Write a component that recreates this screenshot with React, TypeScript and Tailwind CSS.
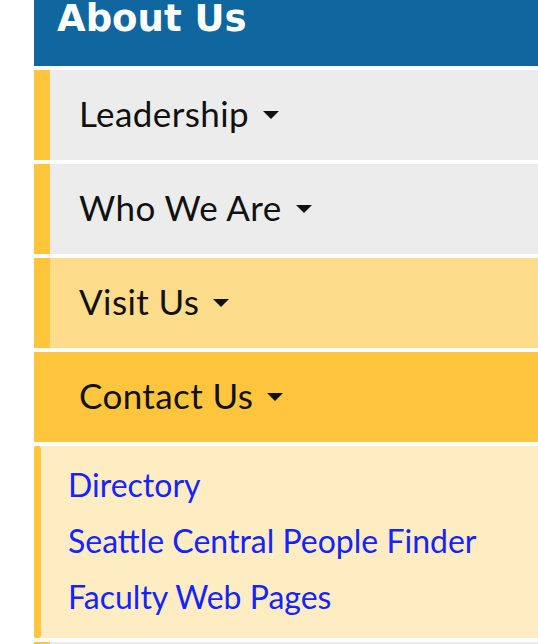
import React from "react";

const font = { fontFamily: "Lato, 'Open Sans', sans-serif" };

function Caret() {
  return (
    <svg width="16" height="8" viewBox="0 0 16 8" className="ml-[14px] mt-[3px]">
      <polygon points="0,0 16,0 8,8" fill="#111" />
    </svg>
  );
}

function Row({ label, bg, bar }: { label: string; bg: string; bar: string }) {
  return (
    <div className="flex h-[90px]">
      <div className={`w-[16px] ${bar}`} />
      <div className={`flex-1 flex items-center pl-[29px] pb-[3px] ${bg}`}>
        <span className="text-[35px] tracking-[0.4px] text-[#111] leading-none">{label}</span>
        <Caret />
      </div>
    </div>
  );
}

export default function App() {
  return (
    <div className="w-[538px] h-[644px] overflow-hidden bg-white pl-[34px]" style={font}>
      <div className="flex flex-col gap-[4px]">
        <div className="h-[66px] bg-[#10679f] pl-[23px]">
          <div
            className="text-white font-bold text-[37px] leading-none"
            style={{ fontFamily: "'DejaVu Sans', Lato, sans-serif" }}
          >
            About Us
          </div>
        </div>
        <Row label="Leadership" bg="bg-[#ececec]" bar="bg-[#ffc53d]" />
        <Row label="Who We Are" bg="bg-[#ececec]" bar="bg-[#ffc53d]" />
        <Row label="Visit Us" bg="bg-[#fddc8b]" bar="bg-[#ffc53d]" />
        <Row label="Contact Us" bg="bg-[#ffc53d]" bar="bg-[#ffc53d]" />
        <div className="flex h-[192px]">
          <div className="w-[7px] bg-[#ffc53d] rounded-[2px]" />
          <div className="flex-1 bg-[#feedc3] py-[12px] pl-[27px] flex flex-col">
            {["Directory", "Seattle Central People Finder", "Faculty Web Pages"].map((t) => (
              <a key={t} href="#" className="h-[56px] flex items-center pb-[3px] text-[32px] text-[#1423ff] leading-none">
                {t}
              </a>
            ))}
          </div>
        </div>
        <div className="flex h-[90px]">
          <div className="w-[16px] bg-[#ffc53d]" />
          <div className="flex-1 bg-[#ececec]" />
        </div>
      </div>
    </div>
  );
}
